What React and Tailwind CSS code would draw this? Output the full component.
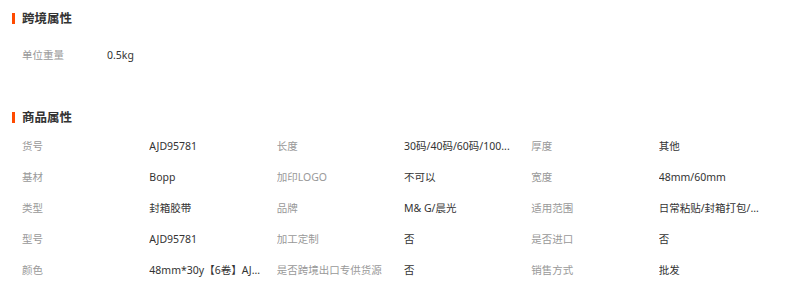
import React from "react";

const rows = [
  ["货号", "AJD95781", "长度", "30码/40码/60码/100...", "厚度", "其他"],
  ["基材", "Bopp", "加印LOGO", "不可以", "宽度", "48mm/60mm"],
  ["类型", "封箱胶带", "品牌", "M& G/晨光", "适用范围", "日常粘贴/封箱打包/..."],
  ["型号", "AJD95781", "加工定制", "否", "是否进口", "否"],
  ["颜色", "48mm*30y【6卷】AJ...", "是否跨境出口专供货源", "否", "销售方式", "批发"],
];

function Heading({ children }) {
  return (
    <div className="flex items-center h-[13px] pl-[12px]">
      <div className="w-[3px] h-[11px] bg-[#ff4a00]" />
      <div className="ml-[7px] text-[12.5px] font-bold text-[#333] leading-[13px] whitespace-nowrap">
        {children}
      </div>
    </div>
  );
}

export default function App() {
  return (
    <div
      className="w-[800px] h-[289px] bg-white overflow-hidden"
      style={{ fontFamily: '"Noto Sans", "Noto Sans CJK SC", sans-serif' }}
    >
      <div className="pt-[12px]">
        <Heading>跨境属性</Heading>
      </div>
      <div className="mt-[15px] pl-[22px] flex items-center h-[31px] text-[10.5px]">
        <div className="w-[85px] text-[#999]">单位重量</div>
        <div className="text-[#333]">0.5kg</div>
      </div>
      <div className="mt-[40px]">
        <Heading>商品属性</Heading>
      </div>
      <div className="mt-[7px] pl-[22px]">
        {rows.map((r, i) => (
          <div key={i} className="grid grid-cols-6 w-[764px] h-[31px] items-center text-[10.5px]">
            {r.map((c, j) => (
              <div
                key={j}
                className={
                  "whitespace-nowrap overflow-hidden " +
                  (j % 2 === 0 ? "text-[#999]" : "text-[#333]")
                }
              >
                {c}
              </div>
            ))}
          </div>
        ))}
      </div>
    </div>
  );
}
